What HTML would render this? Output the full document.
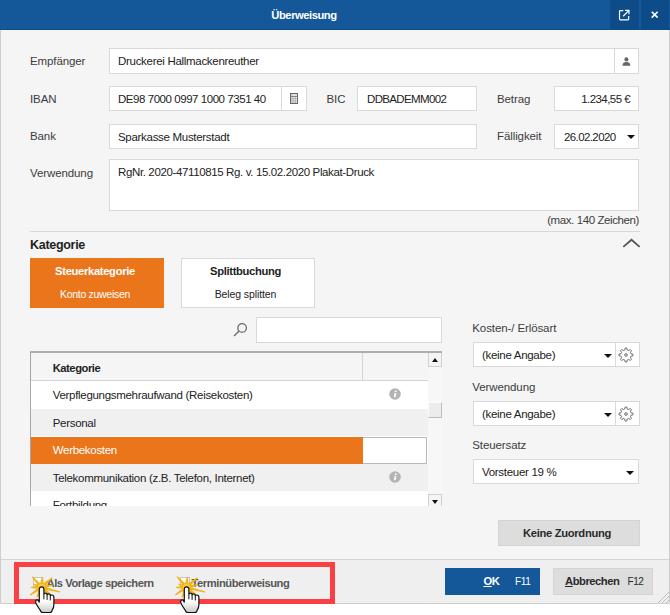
<!DOCTYPE html>
<html lang="de">
<head>
<meta charset="utf-8">
<title>Überweisung</title>
<style>
*{box-sizing:border-box;margin:0;padding:0}
html,body{width:670px;height:615px;background:#fff;overflow:hidden}
body{position:relative;font-family:"Liberation Sans",sans-serif;font-size:11.5px;letter-spacing:-0.3px;color:#222}
.abs{position:absolute}
b,.b{font-weight:bold;font-size:11.2px;letter-spacing:-0.45px}
#dlg{position:absolute;left:0;top:0;width:670px;height:603px;background:#f5f5f5;border-left:1px solid #cecece;border-right:1px solid #cbcbcb}
#title{position:absolute;left:0;top:0;width:670px;height:30px;background:#14589a;border-bottom:1px solid #104c8a;color:#fff}
#title .t{position:absolute;left:0;width:608px;top:0;line-height:30px;text-align:center}
.tb{position:absolute;top:0;height:30px;background:#0e4b89}
.lbl{position:absolute;color:#3c3c3c;line-height:14px;white-space:nowrap;letter-spacing:-0.1px}
.lbl.b{letter-spacing:-0.45px}
.inp{position:absolute;background:#fff;border:1px solid #d9d9d9;white-space:nowrap;overflow:hidden}
.inp span{position:absolute;left:8px;top:1px;line-height:23px}
.btnin{position:absolute;top:0;bottom:0;right:0;width:24px;border-left:1px solid #d9d9d9;background:#fff}
.arrow{position:absolute;width:0;height:0;border-left:4px solid transparent;border-right:4px solid transparent;border-top:4.5px solid #111}
.row{position:absolute;left:0;width:397px;height:27.5px;line-height:29.5px;padding-left:21.700px;overflow:hidden;white-space:nowrap}
.gbtn{position:absolute;background:#dddddd;color:#2a2a2a;white-space:nowrap;box-shadow:inset 0 0 0 1px #d3d3d3}
.gbtn span{position:absolute;top:0}
.cb{position:absolute;width:10px;height:10px;background:#fff;border:1px solid #c4c4c4}
</style>
</head>
<body>
<div id="dlg"></div>
<div id="title"><div class="t b">Überweisung</div>
  <div class="tb" style="left:610px;width:29px">
    <svg class="abs" style="left:7.300px;top:7.700px" width="14.400" height="14.400" viewBox="0 0 16 16" fill="none" stroke="#fff" stroke-width="1.300"><path d="M7 3H3.800a1 1 0 0 0-1 1v8.200a1 1 0 0 0 1 1H12a1 1 0 0 0 1-1V9"/><path d="M6.800 9.200 13 3M9 2.700h4.300V7"/></svg>
  </div>
  <div class="tb" style="left:640.500px;width:28.500px">
    <svg class="abs" style="left:10.500px;top:11px" width="7.400" height="7.400" viewBox="0 0 8 8" stroke="#fff" stroke-width="1.800"><path d="M0.800 0.800l6.400 6.400M7.200 0.800l-6.400 6.400"/></svg>
  </div>
</div>

<!-- form -->
<div class="lbl" style="left:30px;top:54px">Empfänger</div>
<div class="inp" style="left:109px;top:48px;width:530px;height:26px"><span>Druckerei Hallmackenreuther</span>
  <div class="btnin"><svg class="abs" style="left:7.400px;top:7.600px" width="8.800" height="9.200" viewBox="0 0 10 10" preserveAspectRatio="none" fill="#666"><circle cx="5" cy="2.600" r="2.300"/><path d="M0.500 9.500c0-3 2-4 4.500-4s4.500 1 4.500 4z"/></svg></div>
</div>

<div class="lbl" style="left:30px;top:92px">IBAN</div>
<div class="inp" style="left:109px;top:86px;width:198px;height:25px"><span style="letter-spacing:-0.450px">DE98 7000 0997 1000 7351 40</span>
  <div class="btnin" style="width:25px"><svg class="abs" style="left:7.900px;top:6px" width="8.200" height="11" viewBox="0 0 8.200 11" fill="none"><path d="M1 5.600h6.200M1 7.800h6.200M3.100 3.500v6.800M5.300 3.500v6.800" stroke="#a9a9a9" stroke-width="0.900"/><path d="M1 3.300h6.200" stroke="#6a6a6a" stroke-width="1"/><rect x="0.600" y="0.600" width="7" height="9.800" stroke="#666" stroke-width="1.200"/></svg></div>
</div>
<div class="lbl" style="left:326.500px;top:92px">BIC</div>
<div class="inp" style="left:357px;top:86px;width:120px;height:25px"><span style="left:9px;letter-spacing:-0.650px">DDBADEMM002</span></div>
<div class="lbl" style="left:497px;top:92px">Betrag</div>
<div class="inp" style="left:554px;top:86px;width:85px;height:25px"><span style="left:auto;right:8px;letter-spacing:-0.55px">1.234,55 €</span></div>

<div class="lbl" style="left:30px;top:129px">Bank</div>
<div class="inp" style="left:109px;top:124px;width:368px;height:25px"><span>Sparkasse Musterstadt</span></div>
<div class="lbl" style="left:497px;top:129px">Fälligkeit</div>
<div class="inp" style="left:554px;top:124px;width:85px;height:25px"><span style="left:9px;letter-spacing:-0.600px">26.02.2020</span><div class="arrow" style="right:3.500px;top:10px"></div></div>

<div class="lbl" style="left:30px;top:166px">Verwendung</div>
<div class="inp" style="left:109px;top:159px;width:530px;height:52px"><span style="top:1px;line-height:23px;letter-spacing:-0.370px">RgNr. 2020-47110815 Rg. v. 15.02.2020 Plakat-Druck</span></div>
<div class="lbl" style="right:31px;top:213px;letter-spacing:-0.4px">(max. 140 Zeichen)</div>

<div class="abs" style="left:30px;top:231px;width:610px;height:1px;background:#d8d8d8"></div>
<div class="lbl b" style="left:30px;top:238px;font-size:12.500px;color:#222;letter-spacing:-0.300px">Kategorie</div>
<svg class="abs" style="left:621px;top:237px" width="20" height="12" viewBox="0 0 20 12" fill="none" stroke="#555" stroke-width="1.800" stroke-linecap="round"><path d="M2.900 9.400 10.500 2.800l7.600 6.600"/></svg>

<div class="abs" style="left:30px;top:257.500px;width:134px;height:50px;background:#eb751b;color:#fff;text-align:center;padding-right:4px">
  <div class="b" style="line-height:14px;margin-top:6px;letter-spacing:-0.320px">Steuerkategorie</div>
  <div style="font-size:10.500px;line-height:14px;margin-top:9px">Konto zuweisen</div>
</div>
<div class="abs" style="left:181px;top:257.500px;width:134px;height:50px;background:#fff;border:1px solid #d9d9d9;color:#222;text-align:center;padding-right:5px">
  <div class="b" style="line-height:14px;margin-top:5px;letter-spacing:-0.330px">Splittbuchung</div>
  <div style="font-size:10.500px;line-height:14px;margin-top:9px;letter-spacing:-0.100px">Beleg splitten</div>
</div>

<svg class="abs" style="left:232.500px;top:322px" width="15" height="15" viewBox="0 0 14 14" fill="none" stroke="#6a6a6a" stroke-width="1.200"><circle cx="8.500" cy="5.500" r="4"/><path d="M5.600 8.400 1 13"/></svg>
<div class="inp" style="left:256px;top:317px;width:186px;height:26px"></div>

<!-- table -->
<div class="abs" id="tbl" style="left:30px;top:351px;width:412px;height:155px;background:#fff;overflow:hidden;border-top:2px solid #adadad;border-left:1px solid #a6a6a6">
  <div class="row b" style="top:0;height:28px;line-height:30px;background:#f5f5f5;border-bottom:1px solid #d4d4d4">Kategorie</div>
  <div class="abs" style="left:331px;top:0;width:1px;height:28px;background:#d4d4d4"></div>
  <div class="row" style="top:28px;background:#fff">Verpflegungsmehraufwand (Reisekosten)</div>
  <div class="row" style="top:55.500px;background:#f0f0f0">Personal</div>
  <div class="row" style="top:83px;background:#fff;padding-left:0"><div class="abs" style="left:331px;top:1px;width:65px;height:26.500px;border:1px solid #b8b8b8;border-left:0"></div><div class="abs" style="left:0;top:1px;width:331.500px;height:26.500px;background:#eb751b;color:#fff;padding-left:21.700px;line-height:27.500px;overflow:hidden">Werbekosten</div></div>
  <div class="row" style="top:110.500px;background:#f0f0f0">Telekommunikation (z.B. Telefon, Internet)</div>
  <div class="row" style="top:138px;background:#fff">Fortbildung</div>
  <!-- info icons -->
  <svg class="abs" style="left:357.500px;top:34.500px" width="12" height="12" viewBox="0 0 12 12"><circle cx="6" cy="6" r="5.800" fill="#b4b4b4"/><path d="M5.600 5h1.700l-0.700 4.300h-1.700zM6 2.500h1.700l-0.250 1.600h-1.700z" fill="#fff"/></svg>
  <svg class="abs" style="left:357.500px;top:117.500px" width="12" height="12" viewBox="0 0 12 12"><circle cx="6" cy="6" r="5.800" fill="#b4b4b4"/><path d="M5.600 5h1.700l-0.700 4.300h-1.700zM6 2.500h1.700l-0.250 1.600h-1.700z" fill="#fff"/></svg>
  <!-- scrollbar -->
  <div class="abs" style="left:397px;top:0;width:14px;height:155px;background:#f7f7f7">
    <div class="abs" style="left:0;top:0;width:14px;height:14px;background:#f5f5f5;border:1px solid #d0d0d0;border-top:0"><div class="arrow" style="left:3px;top:4.500px;border-left-width:3.500px;border-right-width:3.500px;border-top:0;border-bottom:4px solid #111"></div></div>
    <div class="abs" style="left:0;top:49px;width:14px;height:16px;background:#ececec;border-right:1px solid #bdbdbd;border-bottom:1px solid #bdbdbd;border-left:1px solid #fafafa;border-top:1px solid #fafafa"></div>
    <div class="abs" style="left:0;bottom:0;width:14px;height:14px;background:#f5f5f5;border:1px solid #d0d0d0"><div class="arrow" style="left:3px;top:4.500px;border-left-width:3.500px;border-right-width:3.500px;border-top-width:4px"></div></div>
  </div>
</div>

<!-- right column -->
<div class="lbl" style="left:472.300px;top:321px">Kosten-/ Erlösart</div>
<div class="inp" style="left:473px;top:342px;width:143px;height:25px"><span>(keine Angabe)</span><div class="arrow" style="right:3.500px;top:10.500px"></div></div>
<div class="inp" style="left:615px;top:342px;width:25px;height:25px"><svg class="abs" style="left:2.300px;top:3.500px" width="16" height="16" viewBox="0 0 16 16" fill="none" stroke="#6c6c6c" stroke-width="1" stroke-linejoin="round"><path d="M7.120 1.060 L8.880 1.060 L9.210 2.940 L10.720 3.570 L12.290 2.470 L13.530 3.710 L12.430 5.280 L13.060 6.790 L14.940 7.120 L14.940 8.880 L13.060 9.210 L12.430 10.720 L13.530 12.290 L12.290 13.530 L10.720 12.430 L9.210 13.060 L8.880 14.940 L7.120 14.940 L6.790 13.060 L5.280 12.430 L3.710 13.530 L2.470 12.290 L3.570 10.720 L2.940 9.210 L1.060 8.880 L1.060 7.120 L2.940 6.790 L3.570 5.280 L2.470 3.710 L3.710 2.470 L5.280 3.570 L6.790 2.940Z"/><circle cx="8" cy="8" r="1.300"/></svg></div>
<div class="lbl" style="left:472.300px;top:379.500px">Verwendung</div>
<div class="inp" style="left:473px;top:401px;width:143px;height:25px"><span>(keine Angabe)</span><div class="arrow" style="right:3.500px;top:10.500px"></div></div>
<div class="inp" style="left:615px;top:401px;width:25px;height:25px"><svg class="abs" style="left:2.300px;top:3.500px" width="16" height="16" viewBox="0 0 16 16" fill="none" stroke="#6c6c6c" stroke-width="1" stroke-linejoin="round"><path d="M7.120 1.060 L8.880 1.060 L9.210 2.940 L10.720 3.570 L12.290 2.470 L13.530 3.710 L12.430 5.280 L13.060 6.790 L14.940 7.120 L14.940 8.880 L13.060 9.210 L12.430 10.720 L13.530 12.290 L12.290 13.530 L10.720 12.430 L9.210 13.060 L8.880 14.940 L7.120 14.940 L6.790 13.060 L5.280 12.430 L3.710 13.530 L2.470 12.290 L3.570 10.720 L2.940 9.210 L1.060 8.880 L1.060 7.120 L2.940 6.790 L3.570 5.280 L2.470 3.710 L3.710 2.470 L5.280 3.570 L6.790 2.940Z"/><circle cx="8" cy="8" r="1.300"/></svg></div>
<div class="lbl" style="left:472.300px;top:438px">Steuersatz</div>
<div class="inp" style="left:473px;top:459px;width:166px;height:25px"><span>Vorsteuer 19 %</span><div class="arrow" style="right:4px;top:10.500px"></div></div>

<div class="gbtn b" style="left:497.500px;top:520px;width:142px;height:26px;line-height:26px;text-align:center;letter-spacing:-0.300px;padding-right:3px">Keine Zuordnung</div>

<!-- footer -->
<div class="abs" style="left:1px;top:559px;width:668px;height:44px;background:#efefef;border-top:1px solid #d4d4d4"></div>
<div class="abs" style="left:0;top:603px;width:670px;height:1px;background:#cfcfcf"></div>
<div class="abs" style="left:14px;top:562px;width:321px;height:42px;border:5px solid #fa4042"></div>
<div class="cb" style="left:33px;top:577px"></div>
<div class="lbl b" style="left:46.500px;top:575.500px;color:#565656">Als Vorlage speichern</div>
<div class="cb" style="left:180px;top:577px"></div>
<div class="lbl b" style="left:191.500px;top:575.500px;color:#565656">Terminüberweisung</div>

<div class="gbtn b" style="left:445px;top:568px;width:94.500px;height:26.500px;line-height:27px;background:#14589a;color:#fff;box-shadow:none"><span style="left:38.500px"><u>O</u>K</span><span style="left:70px;font-weight:normal;font-size:10px;letter-spacing:-0.400px">F11</span></div>
<div class="gbtn b" style="left:553px;top:568px;width:100px;height:26.500px;line-height:27px"><span style="left:12px"><u>A</u>bbrechen</span><span style="left:74.500px;font-weight:normal;font-size:10px;letter-spacing:-0.400px">F12</span></div>

<!-- resize grip -->
<svg class="abs" style="left:657px;top:591px" width="12" height="12" viewBox="0 0 12 12" stroke="#bdbdbd" stroke-width="1"><path d="M1 12 12 1M5 12l7-7M9 12l3-3"/></svg>

<!-- click highlights + hand cursors -->
<svg class="abs" style="left:20px;top:566px" width="60" height="49" viewBox="0 0 60 49">
  <defs><linearGradient id="hg" x1="0" y1="0" x2="0" y2="1"><stop offset="0.550" stop-color="#fff"/><stop offset="1" stop-color="#c9c9c9"/></linearGradient></defs>
  <g><path d="M12.500 11.100L20.500 18.400L22.400 11.400L22.900 18.500L31.900 12L24.400 19.900L32.300 19.100L24.700 21.500L39.500 25.900L24.400 22.800L31.700 29.400L23.300 24.100L23.600 29.100L21.200 24.600L17.100 30.900L19.400 23.800L10.700 28.700L18.400 22.300L11.500 21.400L18.400 20.800L14.100 18.400L18.900 19.500z" fill="#f1b51b" stroke="#f1b51b" stroke-width="1.300" stroke-linejoin="round"/><circle cx="21.500" cy="21.400" r="3.600" fill="#f6c93f"/></g>
  <g transform="translate(15.200,20.500)"><path d="M4.100 2.600Q4.100 0.400 6.400 0.400Q8.700 0.400 8.700 2.600L8.700 7.600Q9 6.600 10.300 6.600Q11.900 6.600 11.900 8.200Q12.200 7.300 13.500 7.300Q15.100 7.300 15.100 9.200Q15.500 8.500 16.700 8.500Q18.700 8.500 18.700 11L18.700 18Q18.700 21.500 17 23.600Q16.600 26 14.600 26L8 26Q5.600 26 5 23.600Q2.600 20.300 1.100 17.500Q-0.200 15 0.800 13.800Q2.200 12.800 3.300 14.400L4.100 15.600Z" fill="url(#hg)" stroke="#111" stroke-width="1.200" stroke-linejoin="round"/><path d="M8.700 7.600v5.200M11.900 8.200v5.200M15.100 9.200V14" stroke="#111" stroke-width="1" fill="none"/></g>
</svg>
<svg class="abs" style="left:165.200px;top:566px" width="60" height="49" viewBox="0 0 60 49"><defs><linearGradient id="hg2" x1="0" y1="0" x2="0" y2="1"><stop offset="0.550" stop-color="#fff"/><stop offset="1" stop-color="#c9c9c9"/></linearGradient></defs><g><path d="M12.500 11.100L20.500 18.400L22.400 11.400L22.900 18.500L31.900 12L24.400 19.900L32.300 19.100L24.700 21.500L39.500 25.900L24.400 22.800L31.700 29.400L23.300 24.100L23.600 29.100L21.200 24.600L17.100 30.900L19.400 23.800L10.700 28.700L18.400 22.300L11.500 21.400L18.400 20.800L14.100 18.400L18.900 19.500z" fill="#f1b51b" stroke="#f1b51b" stroke-width="1.300" stroke-linejoin="round"/><circle cx="21.500" cy="21.400" r="3.600" fill="#f6c93f"/></g><g transform="translate(15.200,20.500)"><path d="M4.100 2.600Q4.100 0.400 6.400 0.400Q8.700 0.400 8.700 2.600L8.700 7.600Q9 6.600 10.300 6.600Q11.900 6.600 11.900 8.200Q12.200 7.300 13.500 7.300Q15.100 7.300 15.100 9.200Q15.500 8.500 16.700 8.500Q18.700 8.500 18.700 11L18.700 18Q18.700 21.500 17 23.600Q16.600 26 14.600 26L8 26Q5.600 26 5 23.600Q2.600 20.300 1.100 17.500Q-0.200 15 0.800 13.800Q2.200 12.800 3.300 14.400L4.100 15.600Z" fill="url(#hg2)" stroke="#111" stroke-width="1.200" stroke-linejoin="round"/><path d="M8.700 7.600v5.200M11.900 8.200v5.200M15.100 9.200V14" stroke="#111" stroke-width="1" fill="none"/></g></svg>

</body>
</html>
